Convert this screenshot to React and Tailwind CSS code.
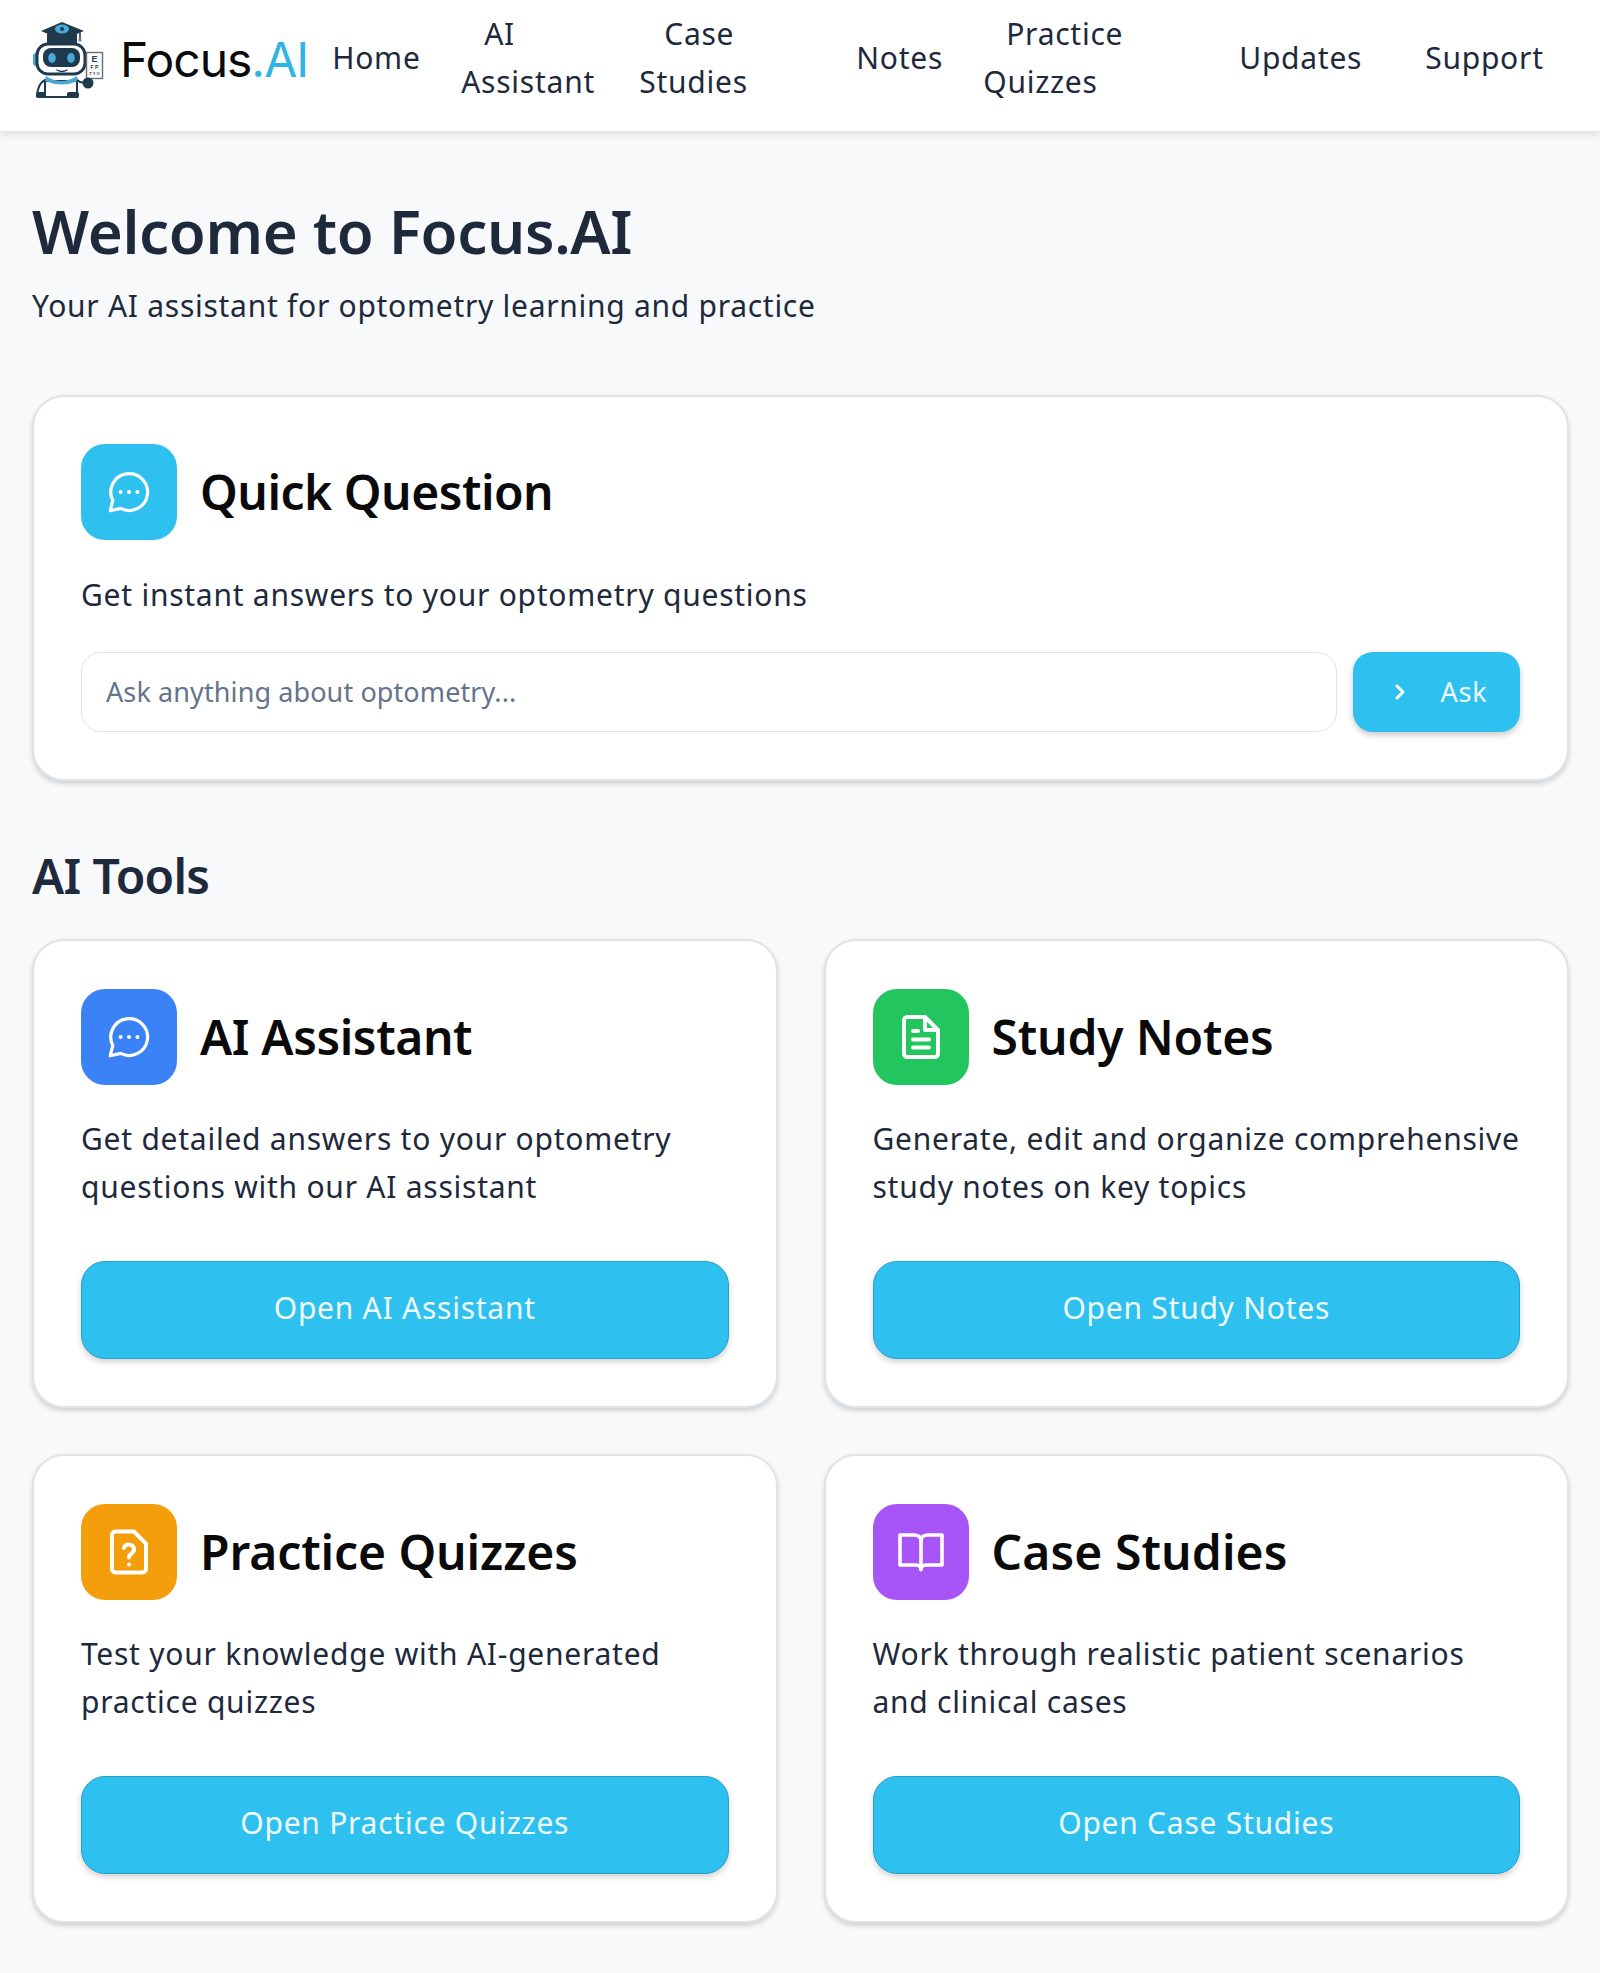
import React from "react";
import { ChevronRight } from "lucide-react";

function RobotLogo() {
  return (
    <svg width="72" height="80" viewBox="32 20 72 80" fill="none">
      <rect x="33" y="53" width="6" height="13" rx="3" fill="#4aa8d8" />
      <path d="M47 34h30v10H47z" fill="#1f3a4d" />
      <path d="M41 31 62 22 84 31 62 40z" fill="#1f3a4d" />
      <ellipse cx="62" cy="29" rx="7" ry="4.5" fill="#4aa8d8" />
      <circle cx="62" cy="29" r="2" fill="#1f3a4d" />
      <path d="M80 32v9" stroke="#1f3a4d" strokeWidth="1.5" />
      <circle cx="80" cy="40" r="1.6" fill="#6b7f8c" />
      <rect x="37" y="44" width="48" height="30" rx="11" fill="#fff" stroke="#1f3a4d" strokeWidth="3" />
      <rect x="43" y="48" width="37" height="19" rx="8" fill="#1f3a4d" />
      <ellipse cx="52" cy="58" rx="3.8" ry="5" fill="#4aa8d8" />
      <ellipse cx="71" cy="58" rx="3.8" ry="5" fill="#4aa8d8" />
      <path d="M57 70q5 3 10 0" stroke="#1f3a4d" strokeWidth="1.4" strokeLinecap="round" />
      <path d="M45 80q-7 3-8 16h8z" fill="#fff" stroke="#1f3a4d" strokeWidth="2" />
      <path d="M45 81h32v16H45z" fill="#fff" stroke="#1f3a4d" strokeWidth="2" />
      <path d="M46 76q15 10 31 0l1 5q-16 7-33 0z" fill="#4aa8d8" />
      <rect x="36" y="92" width="9" height="6" rx="2" fill="#1f3a4d" />
      <rect x="67" y="92" width="12" height="6" rx="2" fill="#1f3a4d" />
      <path d="M77 80q6 5 10 0" stroke="#1f3a4d" strokeWidth="2" fill="#fff" />
      <rect x="86.5" y="52.5" width="16" height="26" fill="#fff" stroke="#60717c" strokeWidth="1.4" />
      <text x="94.5" y="62" textAnchor="middle" fontFamily="Liberation Sans, sans-serif" fontWeight="700" fontSize="9" fill="#1f3a4d">E</text>
      <text x="94.5" y="69" textAnchor="middle" fontFamily="Liberation Sans, sans-serif" fontWeight="700" fontSize="5" fill="#1f3a4d">F P</text>
      <text x="94.5" y="75" textAnchor="middle" fontFamily="Liberation Sans, sans-serif" fontWeight="700" fontSize="4" fill="#1f3a4d">T Y O</text>
      <circle cx="88" cy="83" r="5.5" fill="#1f3a4d" />
    </svg>
  );
}

const strokeProps = { fill: "none", stroke: "#fff", strokeLinecap: "round", strokeLinejoin: "round" };

function ChatIcon() {
  return (
    <svg width="48" height="48" viewBox="0 0 24 24" {...strokeProps} strokeWidth="1.6">
      <path d="M7.9 20.2A9.2 9.2 0 1 0 3.9 16.2L2.6 21.4Z" />
      <circle cx="7.8" cy="12" r="1" fill="#fff" stroke="none" />
      <circle cx="12" cy="12" r="1" fill="#fff" stroke="none" />
      <circle cx="16.2" cy="12" r="1" fill="#fff" stroke="none" />
    </svg>
  );
}

function FileIcon() {
  return (
    <svg width="48" height="48" viewBox="0 0 24 24" {...strokeProps} strokeWidth="2">
      <path d="M14 2H5.2A1.7 1.7 0 0 0 3.5 3.7v16.6A1.7 1.7 0 0 0 5.2 22h13.6a1.7 1.7 0 0 0 1.7-1.7V8.5z" />
      <path d="M14 2v6.5h6.5" />
      <path d="M8 9h2.5M8 13.2h8M8 17.2h8" />
    </svg>
  );
}

function QuizIcon() {
  return (
    <svg width="48" height="48" viewBox="0 0 24 24" {...strokeProps} strokeWidth="2">
      <path d="M14.5 1.8H5.2A1.7 1.7 0 0 0 3.5 3.5v17A1.7 1.7 0 0 0 5.2 22.2h13.6a1.7 1.7 0 0 0 1.7-1.7V7.8z" />
      <path d="M9.4 10a2.7 2.7 0 0 1 5.2.7c0 1.8-2.6 2.2-2.6 4" />
      <path d="M12 18.2h.01" />
    </svg>
  );
}

function BookIcon() {
  return (
    <svg width="48" height="48" viewBox="0 0 24 24" {...strokeProps} strokeWidth="1.8">
      <path d="M1.5 3.5H8.5C10.5 3.5 12 4.5 12 6.5C12 4.5 13.5 3.5 15.5 3.5H22.5V18.5H14.5C13 18.5 12 19.2 12 20.8C12 19.2 11 18.5 9.5 18.5H1.5Z" />
      <path d="M12 6.5V20.8" />
    </svg>
  );
}

function IconTile({ color, children }) {
  return <div className={`w-[96px] h-[96px] rounded-[24px] flex items-center justify-center shrink-0 ${color}`}>{children}</div>;
}

function NavItem({ children, className = "" }) {
  return <a className={`block text-[30px] leading-[48px] tracking-[0.75px] text-[#1e293b] ${className}`}>{children}</a>;
}

function ToolCard({ color, icon, title, titleClass = "tracking-[-0.1px]", text, action }) {
  return (
    <div className="bg-white rounded-[32px] border-2 border-[#e2e3e5] shadow-[0_3px_5px_rgba(0,0,0,0.16)] px-[47px] pt-[48px] pb-[47px]">
      <div className="flex items-center gap-[23px]">
        <IconTile color={color}>{icon}</IconTile>
        <h3 className={`text-[48px] leading-[60px] font-semibold text-[#0a0a0a] ${titleClass}`}>{title}</h3>
      </div>
      <p className="mt-[30px] h-[96px] whitespace-pre text-[30px] leading-[48px] tracking-[0.75px] text-[#1e293b]">{text}</p>
      <button className="mt-[50px] pb-[5px] w-full h-[98px] rounded-[24px] bg-[#2ec0ee] border border-[#2a9fc9] shadow-[0_3px_6px_rgba(0,0,0,0.18)] text-[30px] tracking-[0.75px] text-[#eefbff]">{action}</button>
    </div>
  );
}

export default function App() {
  return (
    <div className="min-h-[1973px] bg-[#f7f9fb] font-['Noto_Sans',sans-serif]">
      <header className="h-[131px] bg-white shadow-[0_3px_8px_rgba(0,0,0,0.12)] flex items-center pl-[32px] pb-[12px]">
        <RobotLogo />
        <div className="ml-[16px] text-[48px] leading-none font-['Inter',sans-serif] font-normal text-[#0a0a0a] tracking-[-1px]">
          Focus<span className="text-[#2fb4e3]">.AI</span>
        </div>
        <nav className="ml-[24px] pb-[4px] flex items-center">
          <NavItem className="w-[129px]">Home</NavItem>
          <NavItem className="w-[178px]"><span className="block pl-[23px]">AI</span><span className="block">Assistant</span></NavItem>
          <NavItem className="w-[217px]"><span className="block pl-[25px]">Case</span><span className="block">Studies</span></NavItem>
          <NavItem className="w-[127px]">Notes</NavItem>
          <NavItem className="w-[256px]"><span className="block pl-[23px]">Practice</span><span className="block">Quizzes</span></NavItem>
          <NavItem className="w-[186px]">Updates</NavItem>
          <NavItem>Support</NavItem>
        </nav>
      </header>

      <main className="pl-[32px] pr-[31px] pt-[64px]">
        <h1 className="text-[60px] leading-[72px] font-semibold tracking-[-0.35px] text-[#1e293b]">Welcome to Focus.AI</h1>
        <p className="mt-[15px] text-[30px] leading-[48px] tracking-[0.72px] text-[#1e293b]">Your AI assistant for optometry learning and practice</p>

        <section className="mt-[65px] bg-white rounded-[32px] border-2 border-[#e2e3e5] shadow-[0_3px_5px_rgba(0,0,0,0.16)] px-[47px] pt-[47px] pb-[47px]">
          <div className="flex items-center gap-[23px]">
            <IconTile color="bg-[#2ec0ee]"><ChatIcon /></IconTile>
            <h2 className="text-[48px] leading-[60px] font-semibold tracking-[-0.5px] text-[#0a0a0a]">Quick Question</h2>
          </div>
          <p className="mt-[31px] text-[30px] leading-[48px] tracking-[0.75px] text-[#1e293b]">Get instant answers to your optometry questions</p>
          <div className="mt-[33px] flex gap-[16px]">
            <input
              readOnly
              placeholder="Ask anything about optometry..."
              className="flex-1 h-[80px] rounded-[20px] border border-[#dfe3e8] bg-white px-[24px] pb-[2px] text-[27px] tracking-[0.1px] placeholder:text-[#64748b] outline-none"
            />
            <button className="w-[167px] h-[80px] pl-[2px] rounded-[20px] bg-[#2ec0ee] shadow-[0_3px_6px_rgba(0,0,0,0.22)] flex items-center justify-center gap-[29px] text-[27px] tracking-[0.75px] text-[#eefbff]">
              <ChevronRight size={24} color="#fff" strokeWidth={3} />
              <span>Ask</span>
            </button>
          </div>
        </section>

        <h2 className="mt-[65px] text-[48px] leading-[60px] font-semibold tracking-[-0.7px] text-[#1e293b]">AI Tools</h2>

        <div className="mt-[33px] grid grid-cols-2 gap-x-[46px] gap-y-[46px]">
          <ToolCard color="bg-[#3b82f6]" icon={<ChatIcon />} title="AI Assistant" titleClass="tracking-[-0.4px]" text={"Get detailed answers to your optometry\nquestions with our AI assistant"} action="Open AI Assistant" />
          <ToolCard color="bg-[#22c55e]" icon={<FileIcon />} title="Study Notes" titleClass="tracking-[-0.2px]" text={"Generate, edit and organize comprehensive\nstudy notes on key topics"} action="Open Study Notes" />
          <ToolCard color="bg-[#f59e0b]" icon={<QuizIcon />} title="Practice Quizzes" text={"Test your knowledge with AI-generated\npractice quizzes"} action="Open Practice Quizzes" />
          <ToolCard color="bg-[#a855f7]" icon={<BookIcon />} title="Case Studies" titleClass="tracking-[0.1px]" text={"Work through realistic patient scenarios\nand clinical cases"} action="Open Case Studies" />
        </div>
      </main>
    </div>
  );
}
